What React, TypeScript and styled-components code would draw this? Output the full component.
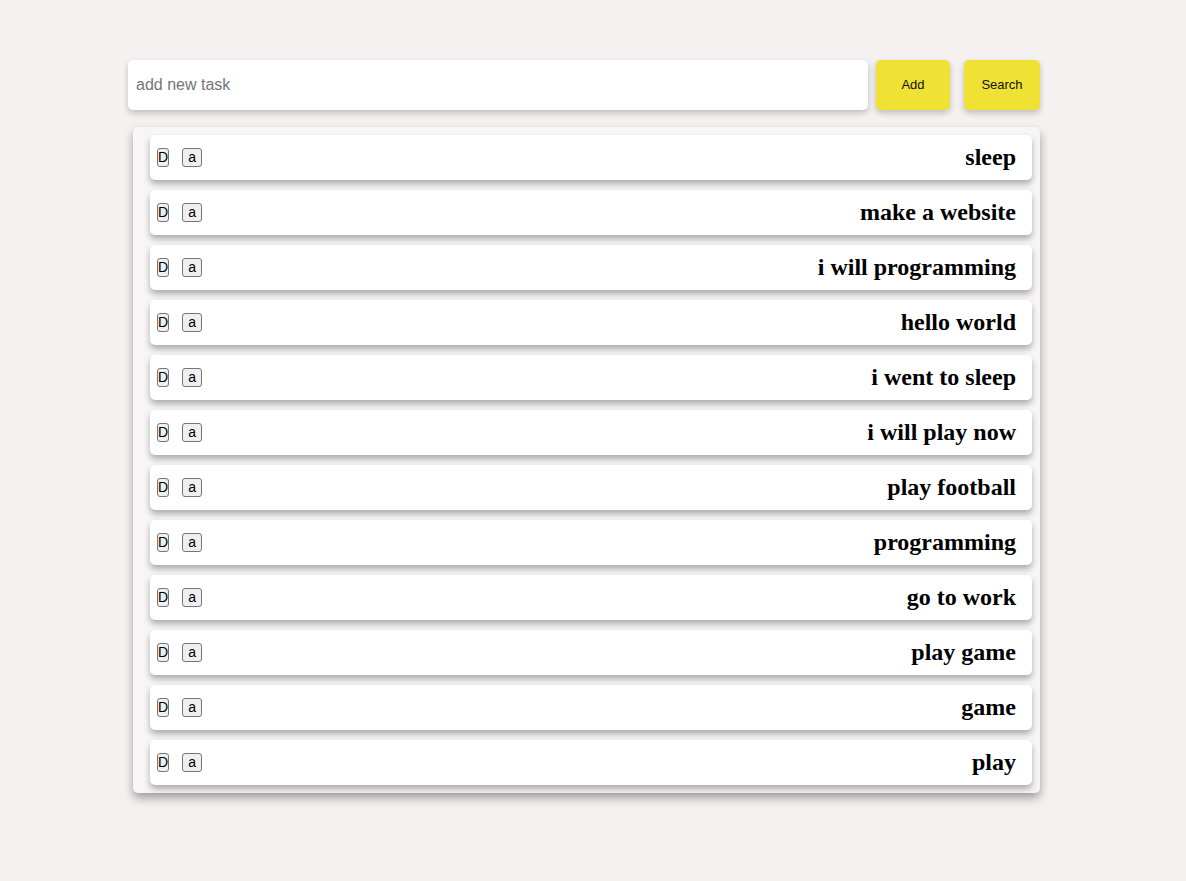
import styled, {createGlobalStyle} from 'styled-components';

const GlobalStyle = createGlobalStyle`
    html, body {
        margin: 0;
        min-height: 100%;
        background-color: #f4f1f0;
        font-family: "Liberation Serif", serif;
    }
`;

const Page = styled.div`
    width: 912px;
    margin-left: 128px;
    padding: 60px 0 80px;
`;

const Form = styled.form`
    display: flex;
    align-items: stretch;
    height: 50px;
`;

const TaskInput = styled.input`
    width: 740px;
    box-sizing: border-box;
    border: none;
    border-radius: 5px;
    background: #fff;
    padding: 0 8px;
    font-family: "Liberation Sans", Arial, sans-serif;
    font-size: 16px;
    box-shadow: 0 3px 6px rgba(0, 0, 0, 0.22);
    outline: none;

    &::placeholder {
        color: #757575;
    }
`;

const YellowButton = styled.button<{ $width: number; $gap: number }>`
    width: ${p => p.$width}px;
    margin-left: ${p => p.$gap}px;
    padding: 0 0 2px;
    border: none;
    border-radius: 5px;
    background-color: #f0e135;
    color: #111;
    font-family: "Liberation Sans", Arial, sans-serif;
    font-size: 13px;
    box-shadow: 0 3px 6px rgba(0, 0, 0, 0.22);
    cursor: pointer;
`;

const List = styled.ul`
    list-style: none;
    margin: 17px 0 0 5px;
    padding: 8px 8px 8px 17px;
    width: 907px;
    box-sizing: border-box;
    background-color: #f7f5f5;
    border-radius: 5px;
    box-shadow: 0 5px 10px rgba(0, 0, 0, 0.35);
    display: flex;
    flex-direction: column;
    gap: 10px;
`;

const Item = styled.li`
    display: flex;
    align-items: center;
    height: 45px;
    padding: 0 16px 0 7px;
    background: #fff;
    border-radius: 5px;
    box-shadow: 0 4px 6px rgba(0, 0, 0, 0.3);
`;

const SmallButton = styled.button<{ $pad: number }>`
    height: 19px;
    padding: 0 ${p => p.$pad}px;
    margin-right: 12px;
    border: 1px solid #767676;
    border-radius: 3px;
    background: #efefef;
    color: #000;
    font-family: "Liberation Sans", Arial, sans-serif;
    font-size: 14px;
    line-height: 17px;
    cursor: pointer;

    &:first-child {
        margin-right: 13px;
    }
`;

const Title = styled.h2`
    margin: 0 0 0 auto;
    font-size: 24px;
    font-weight: bold;
    color: #000;
`;

const tasks = [
    'sleep',
    'make a website',
    'i will programming',
    'hello world',
    'i went to sleep',
    'i will play now',
    'play football',
    'programming',
    'go to work',
    'play game',
    'game',
    'play',
];

export default function App() {
    return (
        <>
            <GlobalStyle/>
            <Page>
                <Form onSubmit={e => e.preventDefault()}>
                    <TaskInput placeholder="add new task"/>
                    <YellowButton $width={74} $gap={8}>Add</YellowButton>
                    <YellowButton $width={76} $gap={14}>Search</YellowButton>
                </Form>
                <List>
                    {tasks.map((t, i) => (
                        <Item key={i}>
                            <SmallButton $pad={0}>D</SmallButton>
                            <SmallButton $pad={5}>a</SmallButton>
                            <Title>{t}</Title>
                        </Item>
                    ))}
                </List>
            </Page>
        </>
    );
}
